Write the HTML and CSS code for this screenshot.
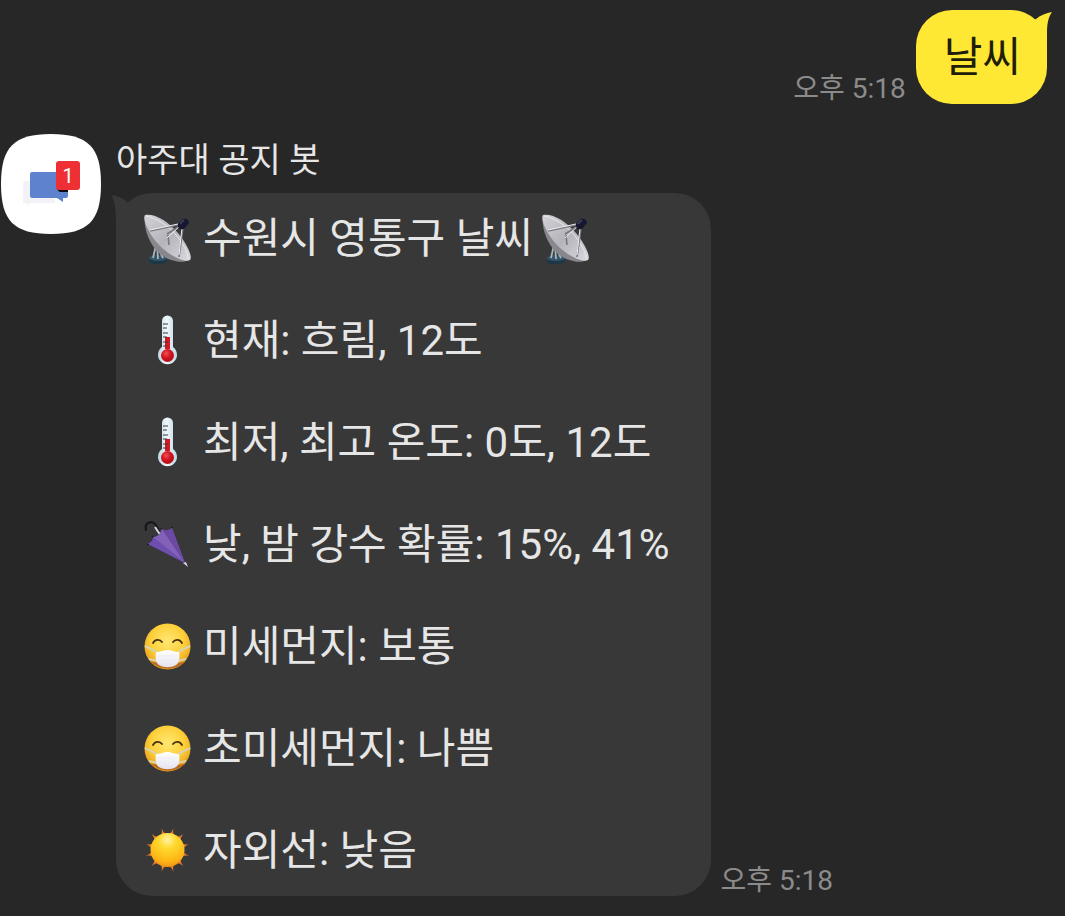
FILE: index.html
```html
<!DOCTYPE html>
<html lang="ko">
<head>
<meta charset="utf-8">
<meta name="viewport" content="width=device-width, initial-scale=1">
<title>아주대 공지 봇</title>
<link rel="stylesheet" href="styles.css">
</head>
<body>
<svg class="defs" width="0" height="0" aria-hidden="true">
  <defs>
    <linearGradient id="dishFill" x1="0" y1="0" x2="1" y2="1">
      <stop offset="0" stop-color="#d4d3d8"/><stop offset=".5" stop-color="#b5b4bb"/><stop offset="1" stop-color="#dad9de"/>
    </linearGradient>
    <radialGradient id="bulbFill" cx=".4" cy=".35" r=".7">
      <stop offset="0" stop-color="#ee5058"/><stop offset=".5" stop-color="#d0141f"/><stop offset="1" stop-color="#b00c16"/>
    </radialGradient>
    <linearGradient id="glassFill" x1="0" x2="1">
      <stop offset="0" stop-color="#b9d4df"/><stop offset=".45" stop-color="#f0f8fb"/><stop offset="1" stop-color="#bdd7e2"/>
    </linearGradient>
    <radialGradient id="faceFill" cx=".5" cy=".38" r=".62">
      <stop offset="0" stop-color="#ffe873"/><stop offset=".6" stop-color="#fdcf39"/><stop offset="1" stop-color="#e79a18"/>
    </radialGradient>
    <linearGradient id="maskFill" x1="0" y1="0" x2="0" y2="1">
      <stop offset="0" stop-color="#fff"/><stop offset="1" stop-color="#e4e3ee"/>
    </linearGradient>
    <radialGradient id="sunFill" cx=".5" cy=".2" r=".85">
      <stop offset="0" stop-color="#fff3a8"/><stop offset=".3" stop-color="#ffd92e"/><stop offset=".75" stop-color="#fdb515"/><stop offset="1" stop-color="#ee8716"/>
    </radialGradient>
    <symbol id="dish" viewBox="0 0 66 66">
      <path d="M13 52v4c3 3 14 3 18 0v-4z" fill="#1d3746"/>
      <ellipse cx="22" cy="52" rx="9" ry="3" fill="#355568"/>
      <path d="M20 39l-3 13M21 39l1 14M23 44l4 8" stroke="#a9b6be" stroke-width="1.800" fill="none"/>
      <path d="M9 9C7 20 12 37 23 47c9 8 23 11 30 7z" fill="#88878e"/>
      <path d="M9 9c9-2 23 6 33 18 9 11 15 24 12 27-4 3-19-3-30-14C13 29 6 13 9 9z" fill="url(#dishFill)"/>
      <path d="M10 10c10 2 22 9 31 20 8 10 11 18 11 23" fill="none" stroke="#e8e7ec" stroke-width="1"/>
      <path d="M14 25l28-6M31 28l13-8M32 29l1 10M47 22l-4 29" stroke="#77777e" stroke-width="1.600" fill="none"/>
      <path d="M14 24l28-6M44 20L31 32M46 22l-3 27" stroke="#eeedf1" stroke-width="1" fill="none"/>
      <path d="M42 18l5-5c3-1 6 1 6 4l-5 6c-4 1-7-1-6-5z" fill="#17172f"/>
      <path d="M44 18l4-4" stroke="#45456a" stroke-width="1.500"/>
    </symbol>
    <symbol id="thermometer" viewBox="0 0 66 66">
      <path d="M26 13a5.500 5.500 0 0 1 11 0v26a9.500 9.500 0 1 1-11 0z" fill="url(#glassFill)"/>
      <path d="M29 29h5v12h-5z" fill="#d41824"/>
      <circle cx="31.500" cy="47.500" r="6.500" fill="url(#bulbFill)"/>
      <path d="M27 16h5M27 20h4M27 25h5M27 29h4M27 34h5M27 38h4" stroke="#333a40" stroke-width="1.200"/>
    </symbol>
    <symbol id="umbrella" viewBox="0 0 66 66">
      <path d="M10 18c-2-8 6-10 10-5l3 6" fill="none" stroke="#19171d" stroke-width="2.200" stroke-linecap="round"/>
      <path d="M19 15l6 9" stroke="#d7d6dc" stroke-width="2"/>
      <path d="M12 32c4-2 5-4 5-7 4 0 7-2 9-8 3 2 6 2 10-1l13 35z" fill="#6848a0"/>
      <path d="M17 25c4 0 7-2 9-8l23 34z" fill="#8361b8"/>
      <path d="M12 32c4-2 5-4 5-7l32 26z" fill="#6e4fb0"/>
      <path d="M26 17c3 2 6 2 10-1l13 35z" fill="#6c49a4"/>
      <path d="M47 51l3-1 2 5z" fill="#d9d2e0"/>
      <path d="M12 33v-1M17 25l-1-1M26 17l-1-1M36 16v-1" stroke="#201a2c" stroke-width="2"/>
    </symbol>
    <symbol id="mask" viewBox="0 0 66 66">
      <circle cx="31.500" cy="32.500" r="23" fill="url(#faceFill)"/>
      <path d="M14 47c10 10 26 10 36 0-4 3-31 3-36 0z" fill="#ba6b24"/>
      <path d="M17 29c2-4 7-4 9-1M37 28c2-3 7-3 9 1" fill="none" stroke="#4c3115" stroke-width="1.800" stroke-linecap="round"/>
      <path d="M9 32l12 6M54 32l-12 6M13 45l9 2M50 45l-9 2" stroke="#d8d3ad" stroke-width="2"/>
      <path d="M20 38c5 0 8-2 11.500-2s6 2 11.500 2c1 7 0 11-3 13-5 3-12 3-17 0-3-2-4-6-3-13z" fill="url(#maskFill)"/>
      <path d="M22 42h19M22 46h19" stroke="#eeedf5" stroke-width="1"/>
    </symbol>
    <path id="ray" d="M27.500 17.500Q31 15 31.500 9.500 32 15 35.500 17.500z"/>
    <symbol id="sun" viewBox="0 0 66 66">
      <g fill="#e07b2c">
        <use href="#ray" transform="rotate(15 31.500 32)"/>
        <use href="#ray" transform="rotate(45 31.500 32)"/>
        <use href="#ray" transform="rotate(75 31.500 32)"/>
        <use href="#ray" transform="rotate(105 31.500 32)"/>
        <use href="#ray" transform="rotate(135 31.500 32)"/>
        <use href="#ray" transform="rotate(165 31.500 32)"/>
        <use href="#ray" transform="rotate(195 31.500 32)"/>
        <use href="#ray" transform="rotate(225 31.500 32)"/>
        <use href="#ray" transform="rotate(255 31.500 32)"/>
        <use href="#ray" transform="rotate(285 31.500 32)"/>
        <use href="#ray" transform="rotate(315 31.500 32)"/>
        <use href="#ray" transform="rotate(345 31.500 32)"/>
      </g>
      <circle cx="31.500" cy="32" r="17" fill="url(#sunFill)"/>
    </symbol>
  </defs>
</svg>

<main class="chat">
  <section class="sent">
    <time class="time" datetime="17:18">오후 5:18</time>
    <div class="bubble bubble-sent">
      <p class="line">날씨</p>
      <svg class="tail tail-sent" viewBox="0 0 26 36" aria-hidden="true"><path d="M10 9C15 5 20 3 26 2c-4 6-5 12-5 22v12L0 14z"/></svg>
    </div>
  </section>

  <section class="received">
    <svg class="avatar" viewBox="0 0 100 100" role="img" aria-label="프로필">
      <path d="M50 0C87 0 100 13 100 50S87 100 50 100 0 87 0 50 13 0 50 0z" fill="#fff"/>
      <path d="M24 47h30v22H30l-4 3v-3h-4V49q0-2 2-2z" fill="#f2f3f6"/>
      <path d="M31 38h34q2 0 2 2v22q0 2-2 2h-3v4l-6-4H31q-2 0-2-2V40q0-2 2-2z" fill="#5f82cf"/>
      <path d="M56 53h11v5h-8q-3-1-3-5z" fill="#0c0c16"/>
      <rect x="55" y="27" width="24" height="29" rx="3" fill="#ee3035"/>
      <text class="badge" x="67" y="49" text-anchor="middle">1</text>
    </svg>
    <div class="content">
      <h1 class="name">아주대 공지 봇</h1>
      <div class="message">
        <div class="bubble bubble-received">
          <svg class="tail tail-received" viewBox="0 0 26 36" aria-hidden="true"><path d="M0 2c7 1 12 3 16 7l8 11L5 36C5 20 5 10 0 2z"/></svg>
          <p class="line"><svg class="emoji" aria-hidden="true"><use href="#dish"/></svg> 수원시 영통구 날씨 <svg class="emoji" aria-hidden="true"><use href="#dish"/></svg></p>
          <p class="line"><svg class="emoji" aria-hidden="true"><use href="#thermometer"/></svg> 현재: 흐림, 12도</p>
          <p class="line"><svg class="emoji" aria-hidden="true"><use href="#thermometer"/></svg> 최저, 최고 온도: 0도, 12도</p>
          <p class="line"><svg class="emoji" aria-hidden="true"><use href="#umbrella"/></svg> 낮, 밤 강수 확률: 15%, 41%</p>
          <p class="line"><svg class="emoji" aria-hidden="true"><use href="#mask"/></svg> 미세먼지: 보통</p>
          <p class="line"><svg class="emoji" aria-hidden="true"><use href="#mask"/></svg> 초미세먼지: 나쁨</p>
          <p class="line"><svg class="emoji" aria-hidden="true"><use href="#sun"/></svg> 자외선: 낮음</p>
        </div>
        <time class="time" datetime="17:18">오후 5:18</time>
      </div>
    </div>
  </section>
</main>
</body>
</html>
```

FILE: styles.css
```css
* {
  box-sizing: border-box;
}

body {
  margin: 0;
  background: #272727;
  color: #e6e6e6;
  font-family: Roboto, "Noto Sans CJK KR", sans-serif;
}

.defs {
  position: absolute;
}

.chat {
  display: flex;
  flex-direction: column;
  gap: 30px;
  padding: 10px 18px 20px 1px;
}

.sent {
  display: flex;
  justify-content: flex-end;
  align-items: flex-end;
  gap: 10px;
}

.received {
  display: flex;
  align-items: flex-start;
  gap: 15px;
}

.avatar {
  flex: none;
  width: 100px;
  height: 100px;
}

.badge {
  fill: #fff;
  font-size: 20px;
}

.name {
  margin: 0 0 7px;
  font-size: 34px;
  font-weight: 400;
  line-height: 52px;
}

.message {
  display: flex;
  align-items: flex-end;
  gap: 10px;
}

.bubble {
  position: relative;
  border-radius: 36px;
  font-size: 42px;
}

.bubble-sent {
  padding: 22px 26px 21px 28px;
  background: #ffe834;
  color: #201d08;
}

.bubble-received {
  display: flex;
  flex-direction: column;
  gap: 51px;
  padding: 20px 41px 20px 28px;
  background: #383838;
}

.line {
  display: flex;
  align-items: center;
  gap: 9px;
  margin: 0;
  line-height: 51px;
}

.emoji {
  flex: none;
  width: 66px;
  height: 66px;
  margin: -8px;
}

.time {
  flex: none;
  color: #8b8b8b;
  font-size: 28px;
  line-height: 30px;
}

.tail {
  position: absolute;
  top: 0;
  width: 26px;
  height: 36px;
}

.tail-sent {
  right: -5px;
  fill: #ffe834;
}

.tail-received {
  left: -5px;
  fill: #383838;
}
```
